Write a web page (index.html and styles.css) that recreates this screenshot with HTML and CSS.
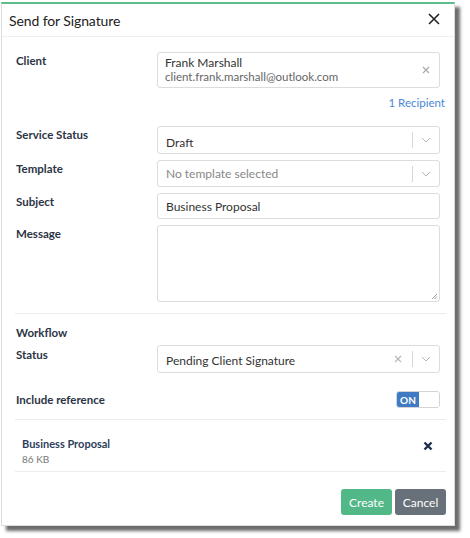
FILE: index.html
```html
<!DOCTYPE html>
<html>
<head>
<meta charset="utf-8">
<link rel="stylesheet" href="styles.css">
</head>
<body>
<div class="modal">
  <div class="modal-header">
    <span class="title">Send for Signature</span>
    <svg class="close" width="12" height="12" viewBox="0 0 12 12"><path d="M1 1L11 11M11 1L1 11" stroke="#222" stroke-width="1.6" fill="none"/></svg>
  </div>
  <div class="modal-body">
    <div class="row row-client">
      <div class="label">Client</div>
      <div class="control client-box">
        <div class="client-text">
          <div class="client-name">Frank Marshall</div>
          <div class="client-email">client.frank.marshall@outlook.com</div>
        </div>
        <svg class="clear" width="8" height="8" viewBox="0 0 8 8"><path d="M1 1L7 7M7 1L1 7" stroke="#aaa" stroke-width="1.2" fill="none"/></svg>
      </div>
    </div>
    <div class="recipient"><span>1 Recipient</span></div>

    <div class="row row-status">
      <div class="label">Service Status</div>
      <div class="control select sel-draft">
        <span class="value">Draft</span>
        <span class="sep"></span>
        <svg class="chev" width="10" height="6" viewBox="0 0 10 6"><path d="M1 1L5 5L9 1" stroke="#b5b5b5" stroke-width="1" fill="none"/></svg>
      </div>
    </div>
    <div class="row">
      <div class="label">Template</div>
      <div class="control select">
        <span class="value placeholder">No template selected</span>
        <span class="sep"></span>
        <svg class="chev" width="10" height="6" viewBox="0 0 10 6"><path d="M1 1L5 5L9 1" stroke="#b5b5b5" stroke-width="1" fill="none"/></svg>
      </div>
    </div>
    <div class="row">
      <div class="label">Subject</div>
      <div class="control input"><span class="value">Business Proposal</span></div>
    </div>
    <div class="row">
      <div class="label">Message</div>
      <div class="control textarea">
        <svg class="grip" width="7" height="7" viewBox="0 0 7 7"><path d="M6 1L1 6M6 3.5L3.5 6" stroke="#888" stroke-width="0.8" fill="none"/></svg>
      </div>
    </div>

    <div class="divider d1"></div>

    <div class="section-title">Workflow</div>
    <div class="row row-wstatus">
      <div class="label">Status</div>
      <div class="control select sel-pending">
        <span class="value">Pending Client Signature</span>
        <svg class="xclear" width="8" height="8" viewBox="0 0 8 8"><path d="M1 1L7 7M7 1L1 7" stroke="#b5b5b5" stroke-width="1.1" fill="none"/></svg>
        <span class="sep"></span>
        <svg class="chev" width="10" height="6" viewBox="0 0 10 6"><path d="M1 1L5 5L9 1" stroke="#b5b5b5" stroke-width="1" fill="none"/></svg>
      </div>
    </div>
    <div class="row row-toggle">
      <div class="label">Include reference</div>
      <div class="toggle-wrap">
        <div class="toggle"><span class="on">ON</span><span class="off"></span></div>
      </div>
    </div>

    <div class="divider d2"></div>

    <div class="attachment">
      <div class="att-text">
        <div class="att-name">Business Proposal</div>
        <div class="att-size">86 KB</div>
      </div>
      <svg class="att-x" width="10" height="10" viewBox="0 0 10 10"><path d="M1.5 1.5L8.5 8.5M8.5 1.5L1.5 8.5" stroke="#1f2f4d" stroke-width="2.4" fill="none"/></svg>
    </div>

    <div class="divider d3"></div>

    <div class="footer">
      <button class="btn btn-create">Create</button>
      <button class="btn btn-cancel">Cancel</button>
    </div>
  </div>
</div>
</body>
</html>
```

FILE: styles.css
```css
html, body {
  margin: 0;
  padding: 0;
  background: #ffffff;
}
body {
  font-family: "Lato", "Open Sans", sans-serif;
  color: #2b3445;
  width: 470px;
  height: 538px;
  overflow: hidden;
}
.modal {
  margin: 2px 0 0 1px;
  width: 454px;
  height: 524px;
  box-sizing: border-box;
  background: #fff;
  border: 1px solid #dcdcdc;
  border-top: 2px solid #5dbb8c;
  box-shadow: 5px 5px 3px rgba(60, 60, 60, 0.75);
  display: flex;
  flex-direction: column;
}
.modal-header {
  height: 33px;
  box-sizing: border-box;
  border-bottom: 1px solid #efefef;
  display: flex;
  align-items: center;
  justify-content: space-between;
  padding: 0 14px 0 7px;
}
.title {
  font-size: 14px;
  color: #222;
  letter-spacing: -0.1px;
}
.close {
  margin-top: -2px;
}
.modal-body {
  padding: 15px 9px 0 13px;
  display: flex;
  flex-direction: column;
}
.row {
  display: flex;
  align-items: flex-start;
  margin-bottom: 6px;
}
.label {
  width: 142px;
  flex: none;
  font-size: 11.5px;
  font-weight: 700;
  color: #2b3445;
  padding-left: 1px;
  box-sizing: border-box;
  line-height: 16px;
}
.control {
  width: 283px;
  box-sizing: border-box;
  border: 1px solid #dcdcdc;
  border-radius: 3px;
  background: #fff;
  font-size: 12px;
  color: #333;
}
.row-client .label {
  padding-top: 1px;
}
.client-box {
  height: 36px;
  display: flex;
  align-items: center;
  justify-content: space-between;
  padding: 0 9px 0 7px;
}
.client-name {
  font-size: 12px;
  color: #333;
  line-height: 14px;
}
.client-email {
  font-size: 11.5px;
  color: #666;
  line-height: 14px;
}
.clear {
  margin-top: -1px;
}
.recipient {
  width: 430px;
  text-align: right;
  font-size: 11.5px;
  color: #4a87d6;
  margin-top: 2px;
  height: 14px;
  line-height: 14px;
}
.row-status {
  margin-top: 16px;
}
.select {
  height: 27px;
  display: flex;
  align-items: center;
  padding: 0 8px 0 8px;
}
.sel-draft {
  height: 28px;
}
.row .label {
  padding-top: 1px;
}
.row-status .sel-draft .value {
  margin-top: 4px;
}
.select .value {
  flex: 1;
}
.placeholder {
  color: #888;
}
.sep {
  width: 1px;
  height: 16px;
  background: #d6d6d6;
  margin: 0 8px 0 0;
}
.input {
  height: 26px;
  display: flex;
  align-items: center;
  padding: 0 8px;
}
.textarea {
  height: 77px;
  position: relative;
}
.grip {
  position: absolute;
  right: 1px;
  bottom: 1px;
}
.divider {
  height: 1px;
  background: #ececec;
  width: 431px;
}
.d1 {
  margin-top: 5px;
}
.section-title {
  font-size: 11.5px;
  font-weight: 700;
  color: #2b3445;
  margin-top: 11px;
  padding-left: 1px;
  line-height: 16px;
}
.row-wstatus {
  margin-top: 4px;
}
.row-wstatus .label {
  padding-top: 2px;
}
.sel-pending {
  height: 28px;
}
.sel-pending .value {
  margin-top: 2px;
}
.xclear {
  margin-right: 10px;
}
.row-toggle {
  margin-top: 12px;
  margin-bottom: 0;
  align-items: center;
}
.row-toggle .label {
  padding-top: 0;
}
.toggle-wrap {
  width: 283px;
  display: flex;
  justify-content: flex-end;
}
.toggle {
  width: 44px;
  height: 17px;
  box-sizing: border-box;
  border: 1px solid #d4d4d4;
  border-radius: 3px;
  display: flex;
  overflow: hidden;
}
.toggle .on {
  width: 22px;
  background: #3e7bc4;
  color: #fff;
  font-size: 10px;
  font-weight: 700;
  display: flex;
  align-items: center;
  justify-content: center;
}
.toggle .off {
  flex: 1;
  background: #fff;
}
.d2 {
  margin-top: 11px;
}
.attachment {
  display: flex;
  align-items: flex-start;
  justify-content: space-between;
  padding: 17px 12px 0 7px;
  height: 34px;
}
.att-name {
  font-size: 11px;
  font-weight: 700;
  color: #2e3f5c;
  line-height: 14px;
}
.att-size {
  font-size: 10px;
  color: #777;
  line-height: 14px;
  margin-top: 1px;
}
.att-x {
  margin-top: 4px;
}
.footer {
  width: 431px;
  display: flex;
  justify-content: flex-end;
  gap: 3px;
  margin-top: 17px;
}
.btn {
  font-family: "Lato", sans-serif;
  font-size: 12px;
  color: #fff;
  border: none;
  border-radius: 3px;
  width: 51px;
  height: 26px;
  padding: 0;
}
.btn-create {
  background: #52b887;
}
.btn-cancel {
  background: #687079;
}
```
